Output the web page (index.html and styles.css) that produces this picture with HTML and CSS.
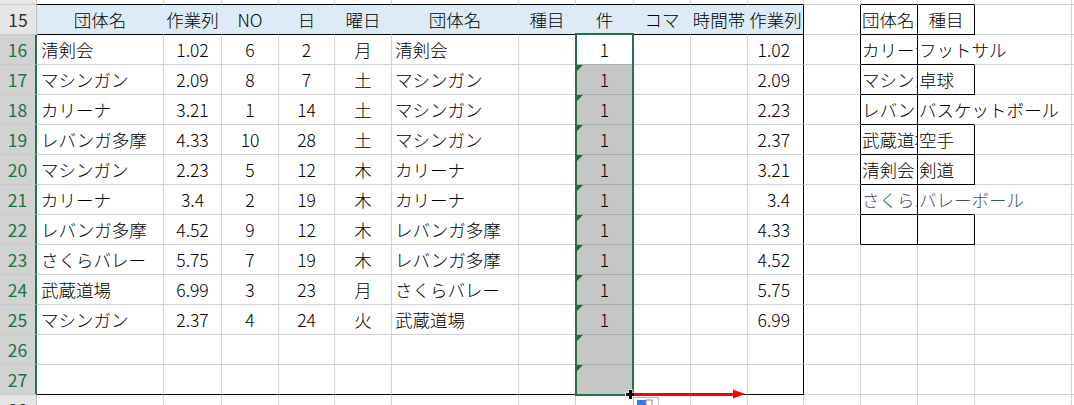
FILE: index.html
```html
<!DOCTYPE html>
<html lang="ja">
<head>
  <meta charset="UTF-8">
  <title>Sheet1</title>
  <link rel="stylesheet" href="styles.css">
</head>
<body>
<div class="sheet">
  <!-- 14 (cut off) -->
  <div class="rh"></div>
  <div class="c bb"></div><div class="c bb"></div><div class="c bb"></div><div class="c bb"></div><div class="c bb"></div><div class="c bb"></div><div class="c bb"></div><div class="c bb"></div><div class="c bb"></div><div class="c bb"></div><div class="c bb"></div>
  <div class="c"></div><div class="c bb"></div><div class="c bb"></div><div class="c"></div><div class="c"></div>

  <!-- 15 -->
  <div class="rh">15</div>
  <div class="c hd">団体名</div><div class="c hd">作業列</div><div class="c hd">NO</div><div class="c hd">日</div><div class="c hd">曜日</div><div class="c hd">団体名</div><div class="c hd">種目</div><div class="c hd">件</div><div class="c hd">コマ</div><div class="c hd">時間帯</div><div class="c hd br">作業列</div>
  <div class="c br"></div><div class="c tb bb br">団体名</div><div class="c ctr bb br">種目</div><div class="c"></div><div class="c"></div>

  <!-- 16 -->
  <div class="rh on">16</div>
  <div class="c a">清剣会</div><div class="c ctr">1.02</div><div class="c ctr">6</div><div class="c ctr">2</div><div class="c ctr">月</div><div class="c">清剣会</div><div class="c"></div><div class="c ctr act">1</div><div class="c"></div><div class="c"></div><div class="c num br">1.02</div>
  <div class="c br"></div><div class="c tb bb br">カリーナ</div><div class="c tb bb ov">フットサル</div><div class="c"></div><div class="c"></div>

  <!-- 17 -->
  <div class="rh on">17</div>
  <div class="c a">マシンガン</div><div class="c ctr">2.09</div><div class="c ctr">8</div><div class="c ctr">7</div><div class="c ctr">土</div><div class="c">マシンガン</div><div class="c"></div><div class="c ctr sel">1</div><div class="c"></div><div class="c"></div><div class="c num br">2.09</div>
  <div class="c br"></div><div class="c tb bb br">マシンガン</div><div class="c tb bb br">卓球</div><div class="c"></div><div class="c"></div>

  <!-- 18 -->
  <div class="rh on">18</div>
  <div class="c a">カリーナ</div><div class="c ctr">3.21</div><div class="c ctr">1</div><div class="c ctr">14</div><div class="c ctr">土</div><div class="c">マシンガン</div><div class="c"></div><div class="c ctr sel">1</div><div class="c"></div><div class="c"></div><div class="c num br">2.23</div>
  <div class="c br"></div><div class="c tb bb br">レバンガ多摩</div><div class="c tb bb ov">バスケットボール</div><div class="c"></div><div class="c"></div>

  <!-- 19 -->
  <div class="rh on">19</div>
  <div class="c a">レバンガ多摩</div><div class="c ctr">4.33</div><div class="c ctr">10</div><div class="c ctr">28</div><div class="c ctr">土</div><div class="c">マシンガン</div><div class="c"></div><div class="c ctr sel">1</div><div class="c"></div><div class="c"></div><div class="c num br">2.37</div>
  <div class="c br"></div><div class="c tb bb br">武蔵道場</div><div class="c tb bb br">空手</div><div class="c"></div><div class="c"></div>

  <!-- 20 -->
  <div class="rh on">20</div>
  <div class="c a">マシンガン</div><div class="c ctr">2.23</div><div class="c ctr">5</div><div class="c ctr">12</div><div class="c ctr">木</div><div class="c">カリーナ</div><div class="c"></div><div class="c ctr sel">1</div><div class="c"></div><div class="c"></div><div class="c num br">3.21</div>
  <div class="c br"></div><div class="c tb bb br">清剣会</div><div class="c tb bb br">剣道</div><div class="c"></div><div class="c"></div>

  <!-- 21 -->
  <div class="rh on">21</div>
  <div class="c a">カリーナ</div><div class="c ctr">3.4</div><div class="c ctr">2</div><div class="c ctr">19</div><div class="c ctr">木</div><div class="c">カリーナ</div><div class="c"></div><div class="c ctr sel">1</div><div class="c"></div><div class="c"></div><div class="c num br">3.4</div>
  <div class="c br"></div><div class="c tb bb br blu">さくらバレー</div><div class="c tb bb ov blu">バレーボール</div><div class="c"></div><div class="c"></div>

  <!-- 22 -->
  <div class="rh on">22</div>
  <div class="c a">レバンガ多摩</div><div class="c ctr">4.52</div><div class="c ctr">9</div><div class="c ctr">12</div><div class="c ctr">木</div><div class="c">レバンガ多摩</div><div class="c"></div><div class="c ctr sel">1</div><div class="c"></div><div class="c"></div><div class="c num br">4.33</div>
  <div class="c br"></div><div class="c tb bb br"></div><div class="c tb bb br"></div><div class="c"></div><div class="c"></div>

  <!-- 23 -->
  <div class="rh on">23</div>
  <div class="c a">さくらバレー</div><div class="c ctr">5.75</div><div class="c ctr">7</div><div class="c ctr">19</div><div class="c ctr">木</div><div class="c">レバンガ多摩</div><div class="c"></div><div class="c ctr sel">1</div><div class="c"></div><div class="c"></div><div class="c num br">4.52</div>
  <div class="c"></div><div class="c"></div><div class="c"></div><div class="c"></div><div class="c"></div>

  <!-- 24 -->
  <div class="rh on">24</div>
  <div class="c a">武蔵道場</div><div class="c ctr">6.99</div><div class="c ctr">3</div><div class="c ctr">23</div><div class="c ctr">月</div><div class="c">さくらバレー</div><div class="c"></div><div class="c ctr sel">1</div><div class="c"></div><div class="c"></div><div class="c num br">5.75</div>
  <div class="c"></div><div class="c"></div><div class="c"></div><div class="c"></div><div class="c"></div>

  <!-- 25 -->
  <div class="rh on">25</div>
  <div class="c a">マシンガン</div><div class="c ctr">2.37</div><div class="c ctr">4</div><div class="c ctr">24</div><div class="c ctr">火</div><div class="c">武蔵道場</div><div class="c"></div><div class="c ctr sel">1</div><div class="c"></div><div class="c"></div><div class="c num br">6.99</div>
  <div class="c"></div><div class="c"></div><div class="c"></div><div class="c"></div><div class="c"></div>

  <!-- 26 -->
  <div class="rh on">26</div>
  <div class="c"></div><div class="c"></div><div class="c"></div><div class="c"></div><div class="c"></div><div class="c"></div><div class="c"></div><div class="c sel"></div><div class="c"></div><div class="c"></div><div class="c br"></div>
  <div class="c"></div><div class="c"></div><div class="c"></div><div class="c"></div><div class="c"></div>

  <!-- 27 -->
  <div class="rh on">27</div>
  <div class="c bb"></div><div class="c bb"></div><div class="c bb"></div><div class="c bb"></div><div class="c bb"></div><div class="c bb"></div><div class="c bb"></div><div class="c sel"></div><div class="c bb"></div><div class="c bb"></div><div class="c bb br"></div>
  <div class="c"></div><div class="c"></div><div class="c"></div><div class="c"></div><div class="c"></div>

  <!-- 28 (cut off) -->
  <div class="rh">28</div>
  <div class="c"></div><div class="c"></div><div class="c"></div><div class="c"></div><div class="c"></div><div class="c"></div><div class="c"></div><div class="c"></div><div class="c"></div><div class="c"></div><div class="c"></div>
  <div class="c"></div><div class="c"></div><div class="c"></div><div class="c"></div><div class="c"></div>

  <!-- selection, fill cursor, drag arrow, auto fill button -->
  <div class="selbox"></div>
  <svg class="cursor" width="13" height="13" viewBox="0 0 13 13">
    <rect x="0" y="4.5" width="11" height="4" fill="#fff"/>
    <rect x="3.5" y="1" width="4" height="11" fill="#fff"/>
    <rect x="1" y="5" width="9" height="3" fill="#000"/>
    <rect x="4" y="2" width="3" height="9" fill="#000"/>
  </svg>
  <svg class="arrow" width="112" height="10" viewBox="0 0 112 10">
    <rect x="0" y="4" width="101" height="3" fill="#ff0000"/>
    <polygon points="99,0.5 111,5 99,9.5" fill="#ff0000"/>
  </svg>
  <svg class="afo" width="26" height="10" viewBox="0 0 26 10">
    <rect x="0.5" y="0.5" width="25" height="12" fill="#fff" stroke="#b9b9b9"/>
    <rect x="4" y="3" width="9" height="8" fill="#3a7be0"/>
    <rect x="13" y="3" width="6" height="8" fill="none" stroke="#8c8c8c"/>
  </svg>
</div>
</body>
</html>
```

FILE: styles.css
```css
html, body {
  margin: 0;
  background: #fff;
  overflow: hidden;
}
.sheet {
  position: relative;
  display: grid;
  grid-template-columns: 37px 127px 58px 57px 56px 57px 127px 57px 58px 57px 57px 56px 57px 57px 57px 97px 2px;
  grid-template-rows: 5px repeat(14, 30px);
  height: 405px;
  overflow: hidden;
  font-family: "Noto Sans CJK JP", "Noto Sans", sans-serif;
  font-weight: 300;
  font-size: 17.5px;
  color: #000;
}
.c {
  box-sizing: border-box;
  border-right: 1px solid #d4d4d4;
  border-bottom: 1px solid #d4d4d4;
  padding: 0 3px;
  line-height: 29px;
  white-space: nowrap;
  overflow: hidden;
}
.rh {
  box-sizing: border-box;
  background: #e6e6e6;
  border-right: 1px solid #bfbfbf;
  border-bottom: 1px solid #c9c9c9;
  color: #333;
  font-weight: 400;
  text-align: center;
  line-height: 29px;
  overflow: hidden;
}
.rh.on {
  background: #d2d2d2;
  color: #217346;
  border-right: 2px solid #217346;
}
.hd {
  background: #ddebf7;
  border-right-color: #ddebf7;
  border-bottom-color: #000;
  text-align: center;
  padding: 0;
}
.a {
  padding-left: 4px;
}
.ctr {
  text-align: center;
}
.num {
  text-align: right;
  padding-right: 13px;
}
.tb {
  padding-left: 1px;
}
.bb {
  border-bottom-color: #000;
}
.br {
  border-right-color: #000;
}
.ov {
  overflow: visible;
  border-right-color: transparent;
}
.blu {
  color: #3d5074;
}
.act {
  border-bottom-color: #b0b0b0;
}
.sel {
  position: relative;
  background: #c6c6c6;
  border-bottom-color: #a9a9a9;
}
.sel::before {
  content: "";
  position: absolute;
  left: 1px;
  top: 0;
  border-top: 6px solid #1e6b3c;
  border-right: 6px solid transparent;
}
.selbox {
  position: absolute;
  left: 575px;
  top: 33px;
  width: 59px;
  height: 363px;
  box-sizing: border-box;
  border: 2px solid #217346;
}
.cursor {
  position: absolute;
  left: 625px;
  top: 388px;
}
.arrow {
  position: absolute;
  left: 634px;
  top: 389px;
}
.afo {
  position: absolute;
  left: 633px;
  top: 397px;
}
```
